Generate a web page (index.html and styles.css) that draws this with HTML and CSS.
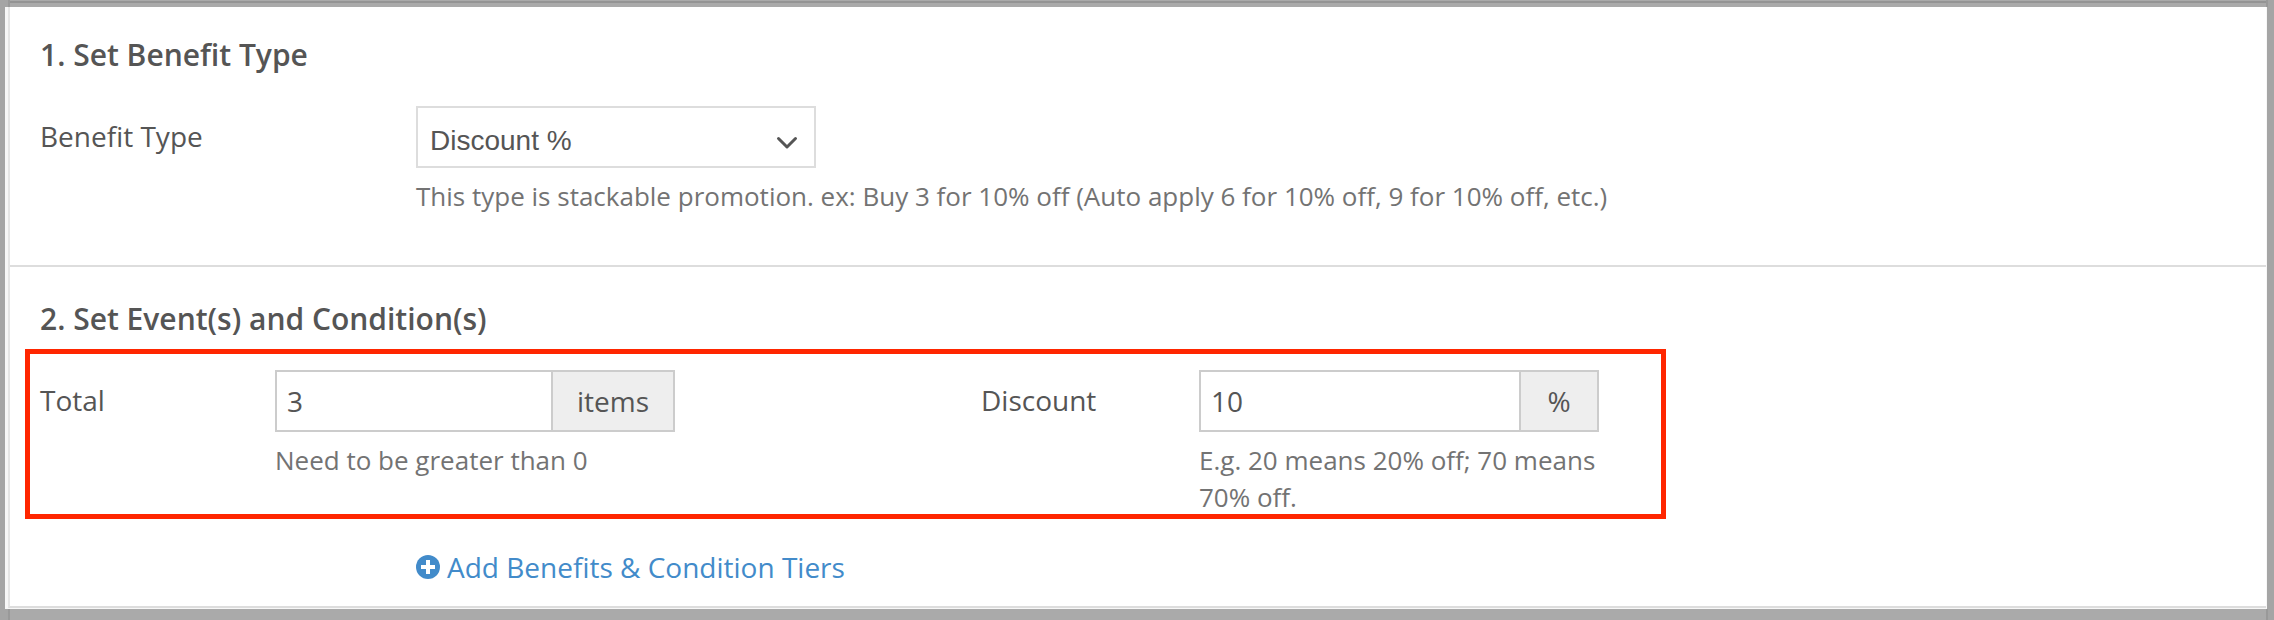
FILE: index.html
```
<!DOCTYPE html>
<html lang="en">
<head>
  <meta charset="UTF-8">
  <meta name="viewport" content="width=device-width, initial-scale=1.0">
  <title>Promotion Settings</title>
  <link rel="stylesheet" href="styles.css">
</head>
<body>

<div class="backdrop backdrop-top"></div>

<main class="spotlight">
  <form class="panel">

    <!-- Benefit Type Section -->
    <section class="section">
      <h2>1. Set Benefit Type</h2>
      <div class="form-row">
        <label for="benefit-type">Benefit Type</label>
        <div class="control">
          <div class="select-wrap">
            <select id="benefit-type">
              <option>Discount %</option>
            </select>
            <svg class="chevron" viewBox="0 0 22 14" aria-hidden="true">
              <path d="M2.5 2.5 L11 11 L19.5 2.5" />
            </svg>
          </div>
          <p class="help">This type is stackable promotion. ex: Buy 3 for 10% off (Auto apply 6 for 10% off, 9 for 10% off, etc.)</p>
        </div>
      </div>
    </section>

    <!-- Events and Conditions Section -->
    <section class="section conditions">
      <h2>2. Set Event(s) and Condition(s)</h2>
      <div class="tier">
        <label for="total">Total</label>
        <div class="control">
          <div class="input-group">
            <input type="text" id="total" value="3">
            <span class="addon">items</span>
          </div>
          <p class="help">Need to be greater than 0</p>
        </div>
        <label for="discount" class="discount-label">Discount</label>
        <div class="control">
          <div class="input-group">
            <input type="text" id="discount" value="10">
            <span class="addon">%</span>
          </div>
          <p class="help">E.g. 20 means 20% off; 70 means 70% off.</p>
        </div>
      </div>
      <div class="form-row">
        <a href="#" class="add-link">
          <svg class="plus" viewBox="0 0 24 24" aria-hidden="true">
            <circle cx="12" cy="12" r="12" />
            <path d="M12 5 V19 M5 12 H19" />
          </svg>
          Add Benefits &amp; Condition Tiers
        </a>
      </div>
    </section>

  </form>
</main>

<div class="backdrop backdrop-bottom"></div>

</body>
</html>
```

FILE: styles.css
```
* {
  margin: 0;
  padding: 0;
  box-sizing: border-box;
}

body {
  font-family: "Open Sans", "Noto Sans", sans-serif;
  font-size: 28px;
  line-height: 40px;
  color: #555;
  background-color: #a5a5a5;
  display: flex;
  flex-direction: column;
  min-height: 100vh;
}

/* Dimmed page around the highlighted panel */
.backdrop {
  margin: 0 6px 0 8px;
  background-color: #aaa;
  border-left: 2px solid #999;
  border-right: 2px solid #999;
}

.backdrop-top {
  height: 7px;
  padding-top: 1px;
}

.backdrop-top::before {
  content: "";
  display: block;
  height: 2px;
  background-color: #949494;
}

.backdrop-bottom {
  flex: 1;
}

.spotlight {
  margin: 0 7px 0 5px;
  padding: 0 1px 1px 3px;
  background-color: #f7f7f7;
}

.panel {
  background-color: #fff;
  border-left: 2px solid #e5e5e5;
  border-bottom: 2px solid #ddd;
}

.section {
  padding: 28px 30px 50px;
}

.section + .section {
  border-top: 2px solid #ddd;
}

.section.conditions {
  padding-top: 32px;
  padding-bottom: 19px;
}

h2 {
  font-size: 30px;
  line-height: 40px;
  font-weight: 600;
}

.form-row {
  display: grid;
  grid-template-columns: 376px 1fr;
  margin-top: 31px;
}

.conditions .form-row {
  margin-top: 28px;
}

label {
  padding-top: 10px;
}

.select-wrap {
  position: relative;
  max-width: 400px;
}

select {
  display: block;
  width: 100%;
  height: 62px;
  padding: 6px 12px 0;
  font-family: "Liberation Sans", Arial, sans-serif;
  font-size: 28px;
  color: #555;
  background-color: #fff;
  border: 2px solid #ddd;
  border-radius: 0;
  appearance: none;
}

.chevron {
  position: absolute;
  right: 18px;
  top: 30px;
  width: 22px;
  height: 14px;
  fill: none;
  stroke: #555;
  stroke-width: 3;
  stroke-linecap: round;
  stroke-linejoin: round;
  pointer-events: none;
}

.help {
  margin-top: 10px;
  font-size: 26px;
  line-height: 37px;
  color: #737373;
}

/* Condition tier */
.tier {
  display: grid;
  grid-template-columns: 235px 400px 1fr 218px 400px;
  max-width: 1641px;
  margin: 10px 0 0 -15px;
  padding: 16px 62px 0 10px;
  border: 5px solid #ff2600;
}

.tier .help {
  margin-bottom: -2px;
}

.discount-label {
  grid-column: 4;
}

.input-group {
  display: flex;
  height: 62px;
  border: 2px solid #ccc;
}

.input-group input {
  flex: 1;
  min-width: 0;
  padding: 0 10px;
  font: inherit;
  color: #555;
  background-color: #fff;
  border: none;
}

.addon {
  display: flex;
  align-items: center;
  justify-content: center;
  min-width: 78px;
  padding: 0 24px;
  background-color: #eee;
  border-left: 2px solid #ccc;
}

.add-link {
  grid-column: 2;
  justify-self: start;
  display: flex;
  align-items: center;
  gap: 7px;
  color: #428bca;
  text-decoration: none;
}

.plus {
  width: 24px;
  height: 24px;
  fill: #428bca;
  stroke: #fff;
  stroke-width: 4;
}

.plus circle {
  stroke: none;
}

@media screen and (max-width: 1500px) {
  .form-row,
  .tier {
    grid-template-columns: 1fr;
  }

  .discount-label,
  .add-link {
    grid-column: 1;
  }
}
```
